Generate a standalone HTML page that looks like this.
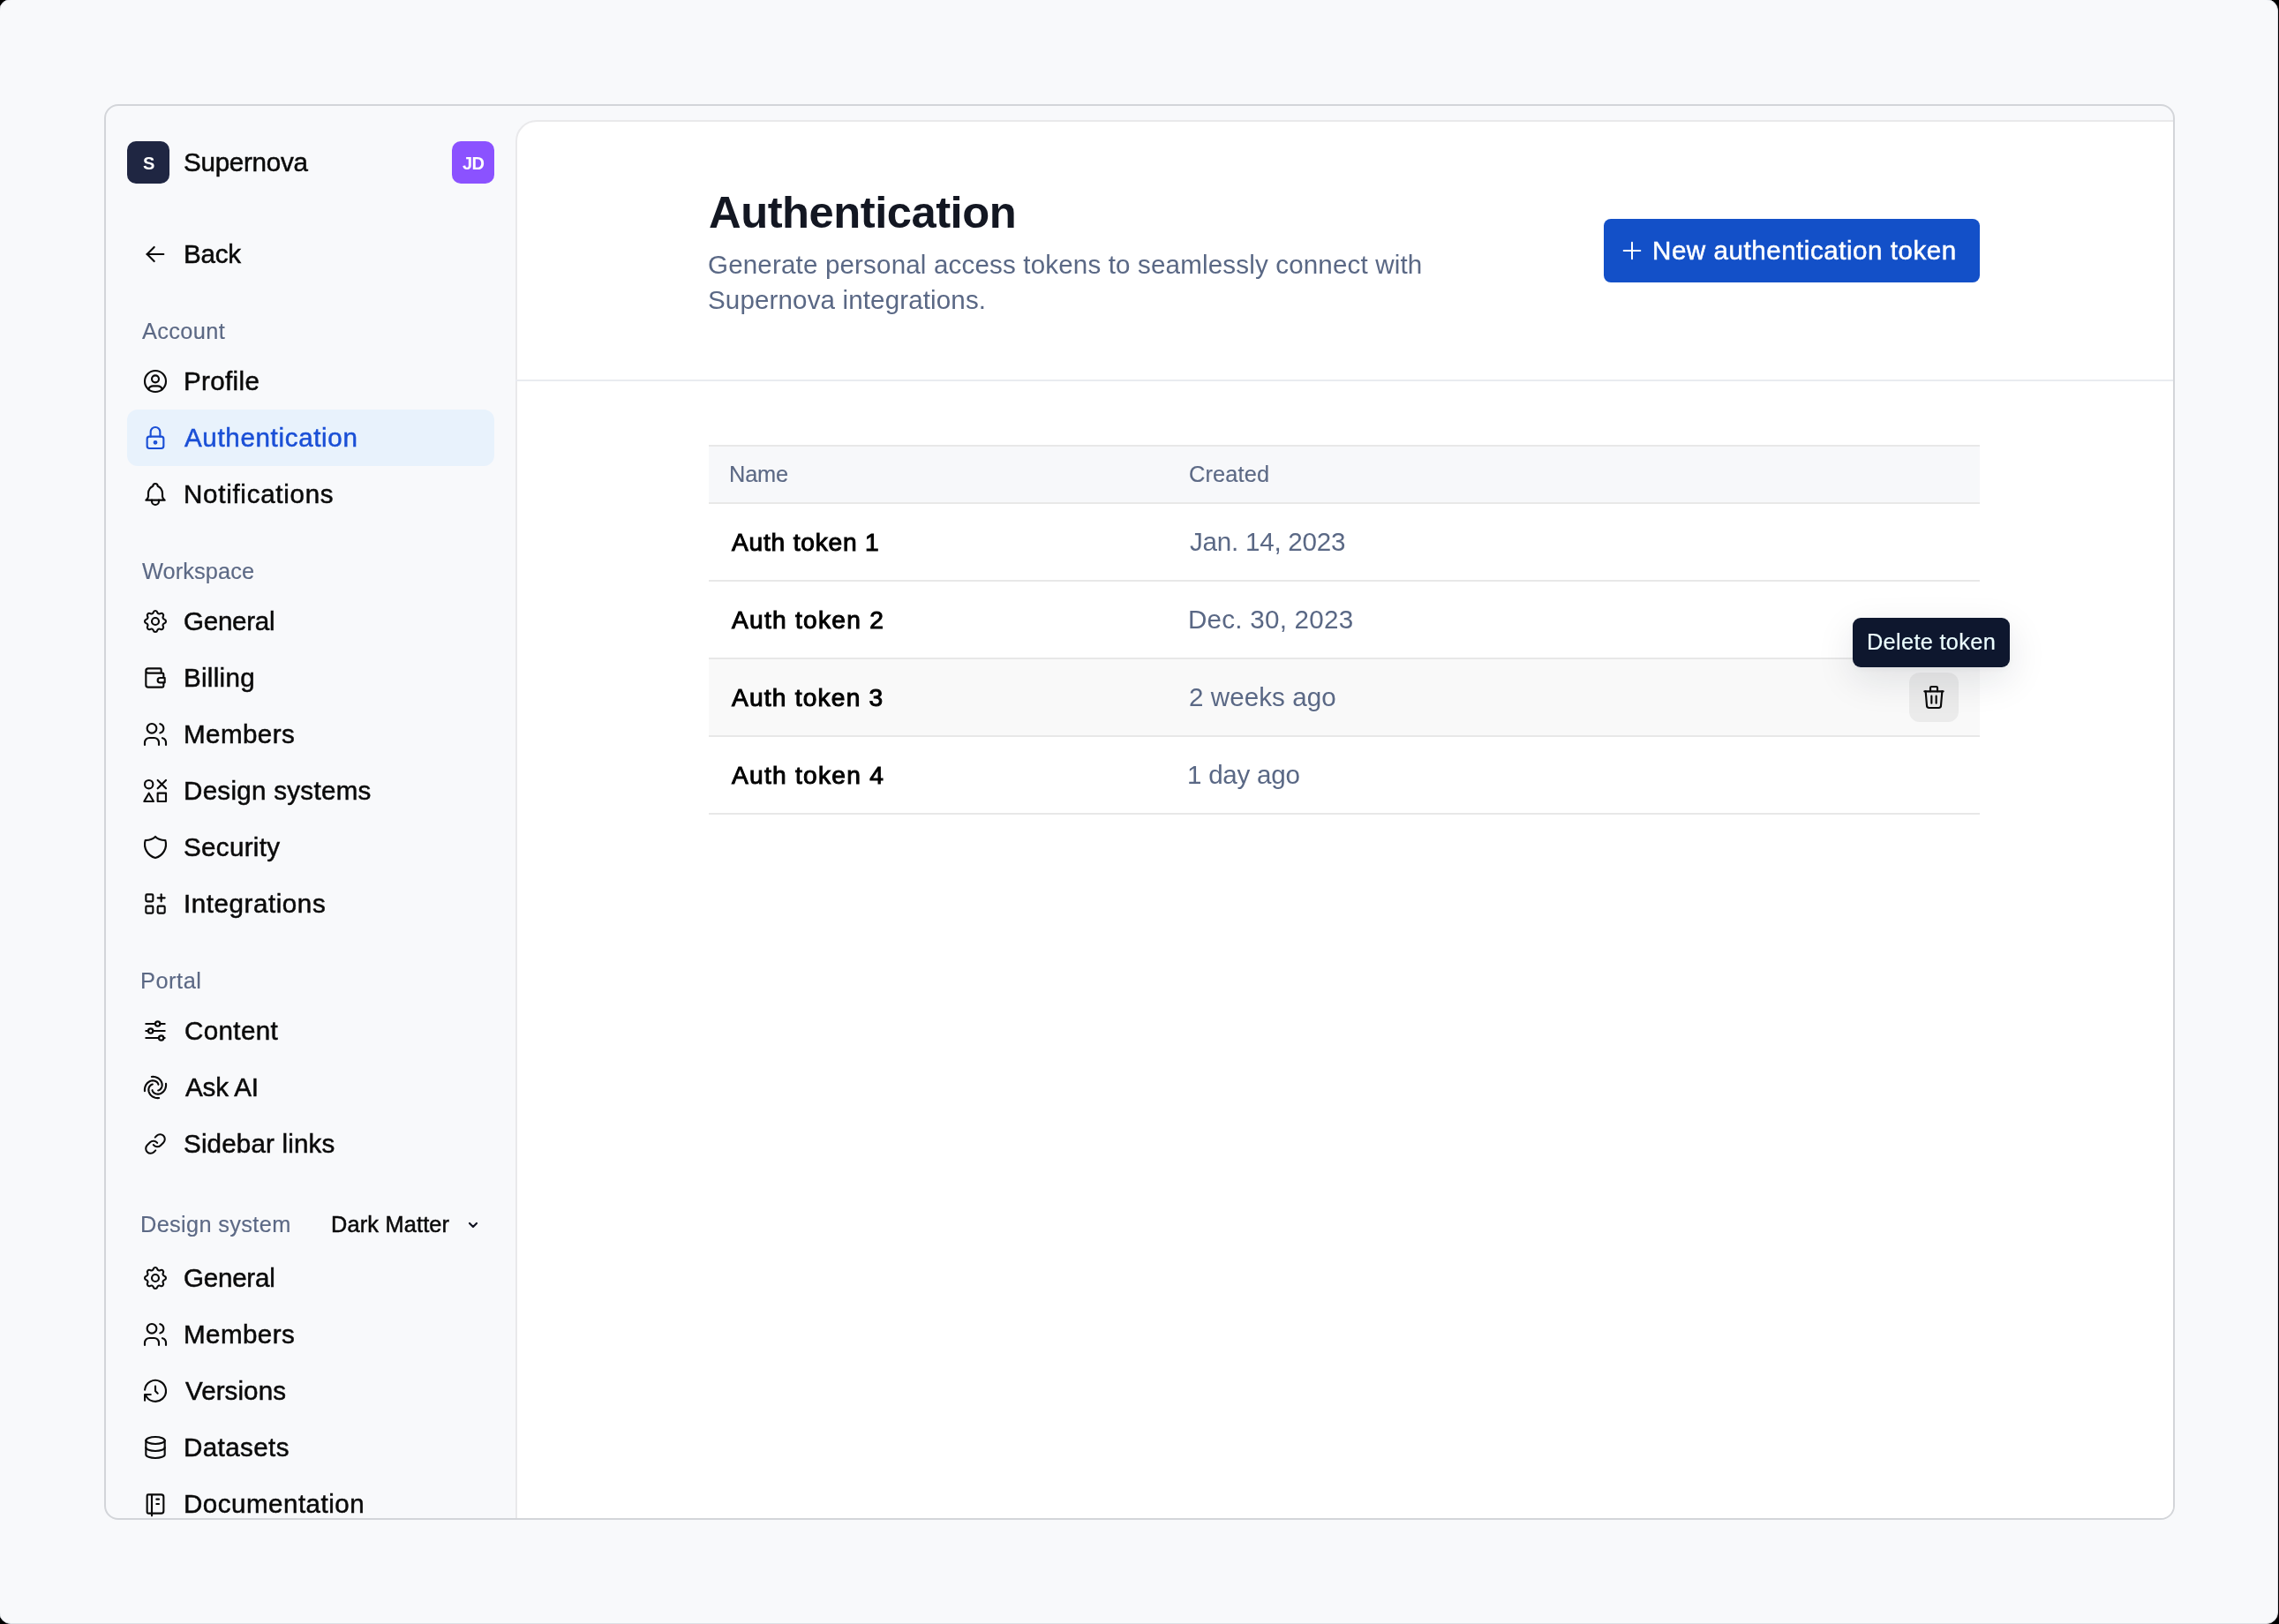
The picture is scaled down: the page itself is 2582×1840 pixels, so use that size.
<!DOCTYPE html>
<html><head><meta charset="utf-8"><style>
html,body{margin:0;padding:0;width:2582px;height:1840px;overflow:hidden;background:#000}
.page{position:absolute;left:-1px;top:-1px;width:2580px;height:1839px;background:#f8f9fb;border:1.5px solid #dcdfe5;border-radius:13px;overflow:hidden}
.frame{position:absolute;left:118px;top:118px;width:2342px;height:1600px;border:2px solid #d3d5d9;border-radius:16px;overflow:hidden;background:#f8f9fb}
.inner{position:absolute;left:-120px;top:-120px;width:2582px;height:1840px}
.box{position:absolute}
.panel{position:absolute;left:584px;top:136px;width:1950px;height:1700px;background:#fff;border:2px solid #e9e9eb;border-radius:24px;box-sizing:border-box}
.t{position:absolute;white-space:nowrap;font-family:"Liberation Sans",sans-serif;will-change:transform}
svg{overflow:visible}
</style></head><body><div class="page">
<div class="frame"><div class="inner">
<div class="box" style="left:144px;top:160px;width:48px;height:48px;background:#1f2642;border-radius:10px"></div>
<div class="box" style="left:512px;top:160px;width:48px;height:48px;background:#8b52ff;border-radius:10px"></div>
<div class="box" style="left:144px;top:464px;width:416px;height:64px;background:#e8f2fc;border-radius:12px"></div>
<svg style="position:absolute;left:160px;top:272px" width="32" height="32" viewBox="0 0 24 24" fill="none" stroke="#0a0a0a" stroke-width="1.6" stroke-linecap="round" stroke-linejoin="round"><path d="M5 12l14 0"/><path d="M5 12l6 6"/><path d="M5 12l6 -6"/></svg>
<svg style="position:absolute;left:160px;top:416px" width="32" height="32" viewBox="0 0 24 24" fill="none" stroke="#0a0a0a" stroke-width="1.6" stroke-linecap="round" stroke-linejoin="round"><path d="M12 12m-9 0a9 9 0 1 0 18 0a9 9 0 1 0 -18 0"/><path d="M12 10m-3 0a3 3 0 1 0 6 0a3 3 0 1 0 -6 0"/><path d="M6.168 18.849a4 4 0 0 1 3.832 -2.849h4a4 4 0 0 1 3.834 2.855"/></svg>
<svg style="position:absolute;left:160px;top:480px" width="32" height="32" viewBox="0 0 24 24" fill="none" stroke="#1a4fd6" stroke-width="1.6" stroke-linecap="round" stroke-linejoin="round"><path d="M5 13a2 2 0 0 1 2 -2h10a2 2 0 0 1 2 2v6a2 2 0 0 1 -2 2h-10a2 2 0 0 1 -2 -2v-6z"/><path d="M11 16a1 1 0 1 0 2 0a1 1 0 0 0 -2 0"/><path d="M8 11v-4a4 4 0 1 1 8 0v4"/></svg>
<svg style="position:absolute;left:160px;top:544px" width="32" height="32" viewBox="0 0 24 24" fill="none" stroke="#0a0a0a" stroke-width="1.6" stroke-linecap="round" stroke-linejoin="round"><path d="M10 5a2 2 0 1 1 4 0a7 7 0 0 1 4 6v3a4 4 0 0 0 2 3h-16a4 4 0 0 0 2 -3v-3a7 7 0 0 1 4 -6"/><path d="M9 17v1a3 3 0 0 0 6 0v-1"/></svg>
<svg style="position:absolute;left:160px;top:688px" width="32" height="32" viewBox="0 0 24 24" fill="none" stroke="#0a0a0a" stroke-width="1.6" stroke-linecap="round" stroke-linejoin="round"><path d="M10.325 4.317c.426 -1.756 2.924 -1.756 3.35 0a1.724 1.724 0 0 0 2.573 1.066c1.543 -.94 3.31 .826 2.37 2.37a1.724 1.724 0 0 0 1.065 2.572c1.756 .426 1.756 2.924 0 3.35a1.724 1.724 0 0 0 -1.066 2.573c.94 1.543 -.826 3.31 -2.37 2.37a1.724 1.724 0 0 0 -2.572 1.065c-.426 1.756 -2.924 1.756 -3.35 0a1.724 1.724 0 0 0 -2.573 -1.066c-1.543 .94 -3.31 -.826 -2.37 -2.37a1.724 1.724 0 0 0 -1.065 -2.572c-1.756 -.426 -1.756 -2.924 0 -3.35a1.724 1.724 0 0 0 1.066 -2.573c-.94 -1.543 .826 -3.31 2.37 -2.37c1 .608 2.296 .07 2.572 -1.065z"/><path d="M9 12a3 3 0 1 0 6 0a3 3 0 0 0 -6 0"/></svg>
<svg style="position:absolute;left:160px;top:752px" width="32" height="32" viewBox="0 0 24 24" fill="none" stroke="#0a0a0a" stroke-width="1.6" stroke-linecap="round" stroke-linejoin="round"><path d="M17 8v-3a1 1 0 0 0 -1 -1h-10a2 2 0 0 0 0 4h12a1 1 0 0 1 1 1v3m0 4v3a1 1 0 0 1 -1 1h-12a2 2 0 0 1 -2 -2v-12"/><path d="M20 12v4h-4a2 2 0 0 1 0 -4h4"/></svg>
<svg style="position:absolute;left:160px;top:816px" width="32" height="32" viewBox="0 0 24 24" fill="none" stroke="#0a0a0a" stroke-width="1.6" stroke-linecap="round" stroke-linejoin="round"><path d="M9 7m-4 0a4 4 0 1 0 8 0a4 4 0 1 0 -8 0"/><path d="M3 21v-2a4 4 0 0 1 4 -4h4a4 4 0 0 1 4 4v2"/><path d="M16 3.13a4 4 0 0 1 0 7.75"/><path d="M21 21v-2a4 4 0 0 0 -3 -3.85"/></svg>
<svg style="position:absolute;left:160px;top:880px" width="32" height="32" viewBox="0 0 24 24" fill="none" stroke="#0a0a0a" stroke-width="1.6" stroke-linecap="round" stroke-linejoin="round"><path d="M6.5 6.5m-3.5 0a3.5 3.5 0 1 0 7 0a3.5 3.5 0 1 0 -7 0"/><path d="M2.5 21h8l-4 -7z"/><path d="M14 3l7 7"/><path d="M14 10l7 -7"/><path d="M14 14h7v7h-7z"/></svg>
<svg style="position:absolute;left:160px;top:944px" width="32" height="32" viewBox="0 0 24 24" fill="none" stroke="#0a0a0a" stroke-width="1.6" stroke-linecap="round" stroke-linejoin="round"><path d="M12 3a12 12 0 0 0 8.5 3a12 12 0 0 1 -8.5 15a12 12 0 0 1 -8.5 -15a12 12 0 0 0 8.5 -3"/></svg>
<svg style="position:absolute;left:160px;top:1008px" width="32" height="32" viewBox="0 0 24 24" fill="none" stroke="#0a0a0a" stroke-width="1.6" stroke-linecap="round" stroke-linejoin="round"><path d="M4 4m0 1a1 1 0 0 1 1 -1h4a1 1 0 0 1 1 1v4a1 1 0 0 1 -1 1h-4a1 1 0 0 1 -1 -1z"/><path d="M4 14m0 1a1 1 0 0 1 1 -1h4a1 1 0 0 1 1 1v4a1 1 0 0 1 -1 1h-4a1 1 0 0 1 -1 -1z"/><path d="M14 14m0 1a1 1 0 0 1 1 -1h4a1 1 0 0 1 1 1v4a1 1 0 0 1 -1 1h-4a1 1 0 0 1 -1 -1z"/><path d="M14 7l6 0"/><path d="M17 4l0 6"/></svg>
<svg style="position:absolute;left:160px;top:1152px" width="32" height="32" viewBox="0 0 24 24" fill="none" stroke="#0a0a0a" stroke-width="1.6" stroke-linecap="round" stroke-linejoin="round"><path d="M14 6m-2 0a2 2 0 1 0 4 0a2 2 0 1 0 -4 0"/><path d="M4 6l8 0"/><path d="M16 6l4 0"/><path d="M8 12m-2 0a2 2 0 1 0 4 0a2 2 0 1 0 -4 0"/><path d="M4 12l2 0"/><path d="M10 12l10 0"/><path d="M17 18m-2 0a2 2 0 1 0 4 0a2 2 0 1 0 -4 0"/><path d="M4 18l11 0"/><path d="M19 18l1 0"/></svg>
<svg style="position:absolute;left:160px;top:1216px" width="32" height="32" viewBox="0 0 24 24" fill="none" stroke="#0a0a0a" stroke-width="1.6" stroke-linecap="round" stroke-linejoin="round"><path d="M8.899 2.994 L9.993 2.945 L11.057 3.024 L12.077 3.225 L13.039 3.539 L13.932 3.954 L14.745 4.459 L15.469 5.042 L16.098 5.689 L16.627 6.386 L17.053 7.120 L17.375 7.876 L17.593 8.639 L17.710 9.398 L17.730 10.138 L17.659 10.849 L17.504 11.518 L17.273 12.138 L16.976 12.699 L16.623 13.196 L16.224 13.622 L15.792 13.974 L15.337 14.251 L14.871 14.452 L14.404 14.578 M21.006 8.899 L21.055 9.993 L20.976 11.057 L20.775 12.077 L20.461 13.039 L20.046 13.932 L19.541 14.745 L18.958 15.469 L18.311 16.098 L17.614 16.627 L16.880 17.053 L16.124 17.375 L15.361 17.593 L14.602 17.710 L13.862 17.730 L13.151 17.659 L12.482 17.504 L11.862 17.273 L11.301 16.976 L10.804 16.623 L10.378 16.224 L10.026 15.792 L9.749 15.337 L9.548 14.871 L9.422 14.404 M15.101 21.006 L14.007 21.055 L12.943 20.976 L11.923 20.775 L10.961 20.461 L10.068 20.046 L9.255 19.541 L8.531 18.958 L7.902 18.311 L7.373 17.614 L6.947 16.880 L6.625 16.124 L6.407 15.361 L6.290 14.602 L6.270 13.862 L6.341 13.151 L6.496 12.482 L6.727 11.862 L7.024 11.301 L7.377 10.804 L7.776 10.378 L8.208 10.026 L8.663 9.749 L9.129 9.548 L9.596 9.422 M2.994 15.101 L2.945 14.007 L3.024 12.943 L3.225 11.923 L3.539 10.961 L3.954 10.068 L4.459 9.255 L5.042 8.531 L5.689 7.902 L6.386 7.373 L7.120 6.947 L7.876 6.625 L8.639 6.407 L9.398 6.290 L10.138 6.270 L10.849 6.341 L11.518 6.496 L12.138 6.727 L12.699 7.024 L13.196 7.377 L13.622 7.776 L13.974 8.208 L14.251 8.663 L14.452 9.129 L14.578 9.596 "/></svg>
<svg style="position:absolute;left:163px;top:1283px" width="26" height="26" viewBox="0 0 24 24" fill="none" stroke="#0a0a0a" stroke-width="1.9" stroke-linecap="round" stroke-linejoin="round"><path d="M10 13a5 5 0 0 0 7.54.54l3-3a5 5 0 0 0-7.07-7.07l-1.72 1.71"/><path d="M14 11a5 5 0 0 0-7.54-.54l-3 3a5 5 0 0 0 7.07 7.07l1.71-1.71"/></svg>
<svg style="position:absolute;left:160px;top:1432px" width="32" height="32" viewBox="0 0 24 24" fill="none" stroke="#0a0a0a" stroke-width="1.6" stroke-linecap="round" stroke-linejoin="round"><path d="M10.325 4.317c.426 -1.756 2.924 -1.756 3.35 0a1.724 1.724 0 0 0 2.573 1.066c1.543 -.94 3.31 .826 2.37 2.37a1.724 1.724 0 0 0 1.065 2.572c1.756 .426 1.756 2.924 0 3.35a1.724 1.724 0 0 0 -1.066 2.573c.94 1.543 -.826 3.31 -2.37 2.37a1.724 1.724 0 0 0 -2.572 1.065c-.426 1.756 -2.924 1.756 -3.35 0a1.724 1.724 0 0 0 -2.573 -1.066c-1.543 .94 -3.31 -.826 -2.37 -2.37a1.724 1.724 0 0 0 -1.065 -2.572c-1.756 -.426 -1.756 -2.924 0 -3.35a1.724 1.724 0 0 0 1.066 -2.573c-.94 -1.543 .826 -3.31 2.37 -2.37c1 .608 2.296 .07 2.572 -1.065z"/><path d="M9 12a3 3 0 1 0 6 0a3 3 0 0 0 -6 0"/></svg>
<svg style="position:absolute;left:160px;top:1496px" width="32" height="32" viewBox="0 0 24 24" fill="none" stroke="#0a0a0a" stroke-width="1.6" stroke-linecap="round" stroke-linejoin="round"><path d="M9 7m-4 0a4 4 0 1 0 8 0a4 4 0 1 0 -8 0"/><path d="M3 21v-2a4 4 0 0 1 4 -4h4a4 4 0 0 1 4 4v2"/><path d="M16 3.13a4 4 0 0 1 0 7.75"/><path d="M21 21v-2a4 4 0 0 0 -3 -3.85"/></svg>
<svg style="position:absolute;left:160px;top:1560px" width="32" height="32" viewBox="0 0 24 24" fill="none" stroke="#0a0a0a" stroke-width="1.6" stroke-linecap="round" stroke-linejoin="round"><path d="M12 8l0 4l2 2"/><path d="M3.05 11a9 9 0 1 1 .5 4m-.5 5v-5h5"/></svg>
<svg style="position:absolute;left:160px;top:1624px" width="32" height="32" viewBox="0 0 24 24" fill="none" stroke="#0a0a0a" stroke-width="1.6" stroke-linecap="round" stroke-linejoin="round"><path d="M12 6m-8 0a8 3 0 1 0 16 0a8 3 0 1 0 -16 0"/><path d="M4 6v6a8 3 0 0 0 16 0v-6"/><path d="M4 12v6a8 3 0 0 0 16 0v-6"/></svg>
<svg style="position:absolute;left:160px;top:1688px" width="32" height="32" viewBox="0 0 24 24" fill="none" stroke="#0a0a0a" stroke-width="1.6" stroke-linecap="round" stroke-linejoin="round"><path d="M6 4h11a2 2 0 0 1 2 2v12a2 2 0 0 1 -2 2h-11a1 1 0 0 1 -1 -1v-14a1 1 0 0 1 1 -1m3 0v18"/><path d="M13 8l2 0"/><path d="M13 12l2 0"/></svg>
<svg style="position:absolute;left:528px;top:1380px" width="16" height="16" viewBox="0 0 24 24" fill="none" stroke="#111422" stroke-width="3.3" stroke-linecap="round" stroke-linejoin="round"><path d="M6 9l6 6l6 -6"/></svg>
<div class="panel"></div>
<div class="box" style="left:584px;top:430px;width:1900px;height:2px;background:#e9ebf0"></div>
<div class="box" style="left:1817px;top:248px;width:426px;height:72px;background:#1350c8;border-radius:8px"></div>
<svg style="position:absolute;left:1832.8px;top:268px" width="32" height="32" viewBox="0 0 24 24" fill="none" stroke="#ffffff" stroke-width="1.5" stroke-linecap="round" stroke-linejoin="round"><path d="M12 5l0 14"/><path d="M5 12l14 0"/></svg>
<div class="box" style="left:803px;top:504px;width:1440px;height:2px;background:#e8e8e8"></div>
<div class="box" style="left:803px;top:506px;width:1440px;height:63px;background:#f7f8fa"></div>
<div class="box" style="left:803px;top:569px;width:1440px;height:2px;background:#e8e8e8"></div>
<div class="box" style="left:803px;top:657px;width:1440px;height:2px;background:#e8e8e8"></div>
<div class="box" style="left:803px;top:745px;width:1440px;height:2px;background:#e8e8e8"></div>
<div class="box" style="left:803px;top:833px;width:1440px;height:2px;background:#e8e8e8"></div>
<div class="box" style="left:803px;top:921px;width:1440px;height:2px;background:#e8e8e8"></div>
<div class="box" style="left:803px;top:747px;width:1440px;height:86px;background:#f9f9f9"></div>
<div class="box" style="left:2163px;top:762px;width:56px;height:56px;background:#ebebeb;border-radius:12px"></div>
<svg style="position:absolute;left:2174.7px;top:774px" width="32" height="32" viewBox="0 0 24 24" fill="none" stroke="#0a0a0a" stroke-width="1.6" stroke-linecap="round" stroke-linejoin="round"><path d="M4 7l16 0"/><path d="M10 11l0 6"/><path d="M14 11l0 6"/><path d="M5 7l1 12a2 2 0 0 0 2 2h8a2 2 0 0 0 2 -2l1 -12"/><path d="M9 7v-3a1 1 0 0 1 1 -1h4a1 1 0 0 1 1 1v3"/></svg>
<div class="box" style="left:2099px;top:700px;width:178px;height:56px;background:#0e172e;border-radius:9px;box-shadow:0 14px 44px rgba(15,23,42,0.11),0 2px 6px rgba(15,23,42,0.04)"></div>
<div class="t" style="left:208.20px;top:167.00px;font-size:29.59px;line-height:33px;font-weight:400;color:#0a0a0a;letter-spacing:-0.275px;-webkit-text-stroke:0.5px;">Supernova</div>
<div class="t" style="left:161.80px;top:174.00px;font-size:20.0px;line-height:22px;font-weight:700;color:#ffffff;letter-spacing:0.000px;">S</div>
<div class="t" style="left:523.70px;top:174.00px;font-size:20.0px;line-height:22px;font-weight:700;color:#ffffff;letter-spacing:-0.700px;">JD</div>
<div class="t" style="left:207.80px;top:271.00px;font-size:29.59px;line-height:33px;font-weight:400;color:#0a0a0a;letter-spacing:-0.267px;-webkit-text-stroke:0.5px;">Back</div>
<div class="t" style="left:161.00px;top:361.00px;font-size:25.36px;line-height:28px;font-weight:400;color:#5c6985;letter-spacing:0.367px;-webkit-text-stroke:0.15px;">Account</div>
<div class="t" style="left:207.50px;top:415.00px;font-size:29.59px;line-height:33px;font-weight:400;color:#0a0a0a;letter-spacing:0.333px;-webkit-text-stroke:0.5px;">Profile</div>
<div class="t" style="left:209.10px;top:479.00px;font-size:29.59px;line-height:33px;font-weight:400;color:#1a4fd6;letter-spacing:0.646px;-webkit-text-stroke:0.5px;">Authentication</div>
<div class="t" style="left:207.50px;top:543.00px;font-size:29.59px;line-height:33px;font-weight:400;color:#0a0a0a;letter-spacing:0.708px;-webkit-text-stroke:0.5px;">Notifications</div>
<div class="t" style="left:161.00px;top:633.00px;font-size:25.36px;line-height:28px;font-weight:400;color:#5c6985;letter-spacing:0.087px;-webkit-text-stroke:0.15px;">Workspace</div>
<div class="t" style="left:208.30px;top:687.00px;font-size:29.59px;line-height:33px;font-weight:400;color:#0a0a0a;letter-spacing:-0.267px;-webkit-text-stroke:0.5px;">General</div>
<div class="t" style="left:207.50px;top:751.00px;font-size:29.59px;line-height:33px;font-weight:400;color:#0a0a0a;letter-spacing:0.283px;-webkit-text-stroke:0.5px;">Billing</div>
<div class="t" style="left:207.50px;top:815.00px;font-size:29.59px;line-height:33px;font-weight:400;color:#0a0a0a;letter-spacing:0.417px;-webkit-text-stroke:0.5px;">Members</div>
<div class="t" style="left:207.50px;top:879.00px;font-size:29.59px;line-height:33px;font-weight:400;color:#0a0a0a;letter-spacing:0.277px;-webkit-text-stroke:0.5px;">Design systems</div>
<div class="t" style="left:208.30px;top:943.00px;font-size:29.59px;line-height:33px;font-weight:400;color:#0a0a0a;letter-spacing:0.314px;-webkit-text-stroke:0.5px;">Security</div>
<div class="t" style="left:207.50px;top:1007.00px;font-size:29.59px;line-height:33px;font-weight:400;color:#0a0a0a;letter-spacing:0.555px;-webkit-text-stroke:0.5px;">Integrations</div>
<div class="t" style="left:159.20px;top:1097.00px;font-size:25.36px;line-height:28px;font-weight:400;color:#5c6985;letter-spacing:0.540px;-webkit-text-stroke:0.15px;">Portal</div>
<div class="t" style="left:208.50px;top:1151.00px;font-size:29.59px;line-height:33px;font-weight:400;color:#0a0a0a;letter-spacing:0.367px;-webkit-text-stroke:0.5px;">Content</div>
<div class="t" style="left:209.50px;top:1215.00px;font-size:29.59px;line-height:33px;font-weight:400;color:#0a0a0a;letter-spacing:-0.180px;-webkit-text-stroke:0.5px;">Ask AI</div>
<div class="t" style="left:208.10px;top:1279.00px;font-size:29.59px;line-height:33px;font-weight:400;color:#0a0a0a;letter-spacing:0.158px;-webkit-text-stroke:0.5px;">Sidebar links</div>
<div class="t" style="left:159.20px;top:1373.00px;font-size:25.36px;line-height:28px;font-weight:400;color:#5c6985;letter-spacing:0.333px;-webkit-text-stroke:0.15px;">Design system</div>
<div class="t" style="left:374.50px;top:1373.00px;font-size:25.36px;line-height:28px;font-weight:400;color:#0a0a0a;letter-spacing:0.160px;-webkit-text-stroke:0.5px;">Dark Matter</div>
<div class="t" style="left:208.30px;top:1431.00px;font-size:29.59px;line-height:33px;font-weight:400;color:#0a0a0a;letter-spacing:-0.250px;-webkit-text-stroke:0.5px;">General</div>
<div class="t" style="left:207.50px;top:1495.00px;font-size:29.59px;line-height:33px;font-weight:400;color:#0a0a0a;letter-spacing:0.417px;-webkit-text-stroke:0.5px;">Members</div>
<div class="t" style="left:209.50px;top:1559.00px;font-size:29.59px;line-height:33px;font-weight:400;color:#0a0a0a;letter-spacing:0.071px;-webkit-text-stroke:0.5px;">Versions</div>
<div class="t" style="left:207.50px;top:1623.00px;font-size:29.59px;line-height:33px;font-weight:400;color:#0a0a0a;letter-spacing:0.400px;-webkit-text-stroke:0.5px;">Datasets</div>
<div class="t" style="left:207.50px;top:1687.00px;font-size:29.59px;line-height:33px;font-weight:400;color:#0a0a0a;letter-spacing:0.475px;-webkit-text-stroke:0.5px;">Documentation</div>
<div class="t" style="left:803.00px;top:212.00px;font-size:50.72px;line-height:57px;font-weight:700;color:#131722;letter-spacing:-0.485px;">Authentication</div>
<div class="t" style="left:802.40px;top:283.00px;font-size:29.59px;line-height:33px;font-weight:400;color:#5a6885;letter-spacing:0.151px;">Generate personal access tokens to seamlessly connect with</div>
<div class="t" style="left:802.40px;top:323.00px;font-size:29.59px;line-height:33px;font-weight:400;color:#5a6885;letter-spacing:0.118px;">Supernova integrations.</div>
<div class="t" style="left:1872.30px;top:267.00px;font-size:29.59px;line-height:33px;font-weight:400;color:#ffffff;letter-spacing:0.526px;-webkit-text-stroke:0.5px;">New authentication token</div>
<div class="t" style="left:826.20px;top:523.00px;font-size:25.36px;line-height:28px;font-weight:400;color:#5c6985;letter-spacing:-0.167px;-webkit-text-stroke:0.15px;">Name</div>
<div class="t" style="left:1347.10px;top:523.00px;font-size:25.36px;line-height:28px;font-weight:400;color:#5c6985;letter-spacing:0.150px;-webkit-text-stroke:0.15px;">Created</div>
<div class="t" style="left:828.90px;top:599.00px;font-size:28.14px;line-height:31px;font-weight:400;color:#000000;letter-spacing:0.800px;-webkit-text-stroke:1.0px;">Auth token 1</div>
<div class="t" style="left:828.50px;top:687.00px;font-size:28.14px;line-height:31px;font-weight:400;color:#000000;letter-spacing:1.273px;-webkit-text-stroke:1.0px;">Auth token 2</div>
<div class="t" style="left:828.70px;top:775.00px;font-size:28.14px;line-height:31px;font-weight:400;color:#000000;letter-spacing:1.209px;-webkit-text-stroke:1.0px;">Auth token 3</div>
<div class="t" style="left:828.70px;top:863.00px;font-size:28.14px;line-height:31px;font-weight:400;color:#000000;letter-spacing:1.273px;-webkit-text-stroke:1.0px;">Auth token 4</div>
<div class="t" style="left:1348.10px;top:597.00px;font-size:29.59px;line-height:33px;font-weight:400;color:#5a6885;letter-spacing:-0.233px;">Jan. 14, 2023</div>
<div class="t" style="left:1346.00px;top:685.00px;font-size:29.59px;line-height:33px;font-weight:400;color:#5a6885;letter-spacing:0.250px;">Dec. 30, 2023</div>
<div class="t" style="left:1346.70px;top:773.00px;font-size:29.59px;line-height:33px;font-weight:400;color:#5a6885;letter-spacing:0.060px;">2 weeks ago</div>
<div class="t" style="left:1344.70px;top:861.00px;font-size:29.59px;line-height:33px;font-weight:400;color:#5a6885;letter-spacing:-0.250px;">1 day ago</div>
<div class="t" style="left:2114.60px;top:713.00px;font-size:25.36px;line-height:28px;font-weight:400;color:#ecfeff;letter-spacing:0.309px;-webkit-text-stroke:0.2px;">Delete token</div>
</div></div>
</div></body></html>
